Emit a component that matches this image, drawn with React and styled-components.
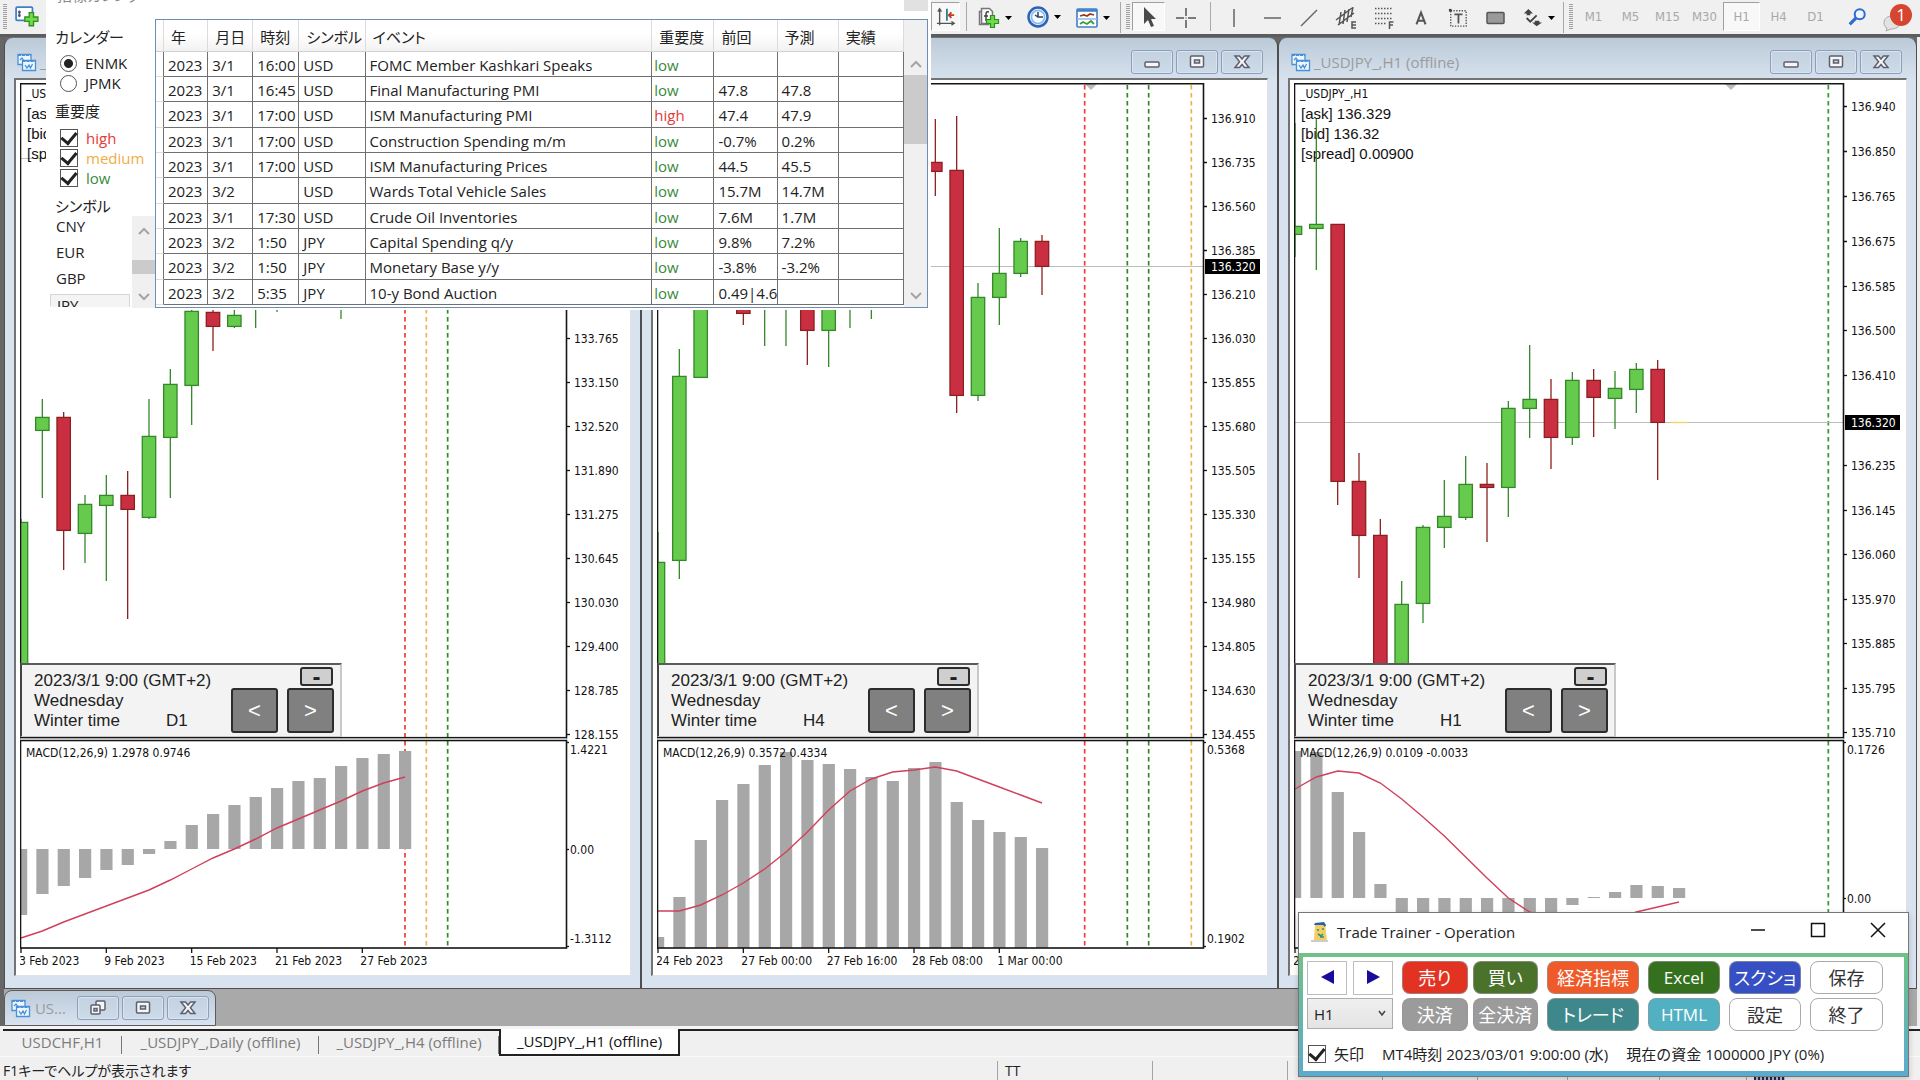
import React from "react";
import styled, { createGlobalStyle, css } from "styled-components";

const UI = `"Open Sans", "Noto Sans CJK JP", sans-serif`;
const CHART = `"DejaVu Sans Condensed", "Open Sans", sans-serif`;
const ARIAL = `"Liberation Sans", Arial, sans-serif`;

const GlobalStyle = createGlobalStyle`
  * { box-sizing: border-box; }
  body { margin: 0; background: #f0f0f0; font-family: ${UI}; color: #222; overflow: hidden; }
  button, select, input { font: inherit; color: inherit; margin: 0; }
`;

const Page = styled.div`
  position: relative;
  display: flex;
  flex-direction: column;
  min-height: 100vh;
  overflow: hidden;
`;

/* ---------- toolbar ---------- */

const Toolbar = styled.header`
  display: flex;
  align-items: stretch;
  height: 37px;
  padding-top: 2px;
  background: #f0f0f0;
  border-bottom: 3px solid #5c5c5c;
`;

const Spacer = styled.div`
  flex: 1;
`;

const ToolButton = styled.button`
  display: flex;
  align-items: center;
  justify-content: ${(p) => (p.$start ? "flex-start" : "center")};
  gap: 5px;
  width: ${(p) => p.$w || 37}px;
  height: 29px;
  margin-top: ${(p) => (p.$low ? 1 : 0)}px;
  padding: 0 0 0 ${(p) => (p.$start ? 5 : 0)}px;
  border: 0;
  background: none;
  font-family: ${CHART};
  font-size: 13px;
  color: #a8a8a8;
  ${(p) =>
    p.$pressed &&
    css`
      background: #f8f8f8;
      border: 1px solid;
      border-color: #a0a0a0 #fff #fff #a0a0a0;
    `}
`;

const ToolSeparator = styled.div`
  width: ${(p) => p.$w}px;
  height: 29px;
  background: linear-gradient(#a8a8a8, #a8a8a8) center / 1px 100% no-repeat;
`;

const Grip = styled.div`
  width: 12px;
  height: 31px;
  border-left: ${(p) => (p.$first ? 0 : 1)}px solid #a8a8a8;
  background: repeating-linear-gradient(#a0a0a0 0 1px, #f0f0f0 1px 2px) ${(p) => (p.$first ? 3 : 5)}px 2px / 4px 26px no-repeat;
`;

/* ---------- desktop and chart windows ---------- */

const Desktop = styled.main`
  flex: 1;
  display: flex;
  flex-direction: column;
  background: #a9a9a9;
  border-left: 4px solid #666;
  border-right: 3px solid #eee;
`;

const Tiles = styled.div`
  display: grid;
  grid-template-columns: 637fr 637fr 639fr;
  background: #666;
`;

const WindowFrame = styled.section`
  border: 1px solid #4e4e4e;
  border-top-color: #6b7680;
  border-radius: 9px 9px 0 0;
  background: linear-gradient(#bccad8, #d8e3ef 44px);
  padding: 0 9px 12px;
  overflow: hidden;
`;

const TitleBar = styled.div`
  display: flex;
  align-items: center;
  gap: 3px;
  height: 40px;
  padding: 7px 5px 0 3px;
`;

const WindowTitle = styled.h2`
  flex: 1;
  margin: 0;
  font-size: 15px;
  line-height: 20px;
  font-weight: 400;
  color: #9b9b9b;
  white-space: nowrap;
`;

const CaptionButtons = styled.div`
  display: flex;
  gap: 3px;
`;

const CaptionButton = styled.button`
  display: flex;
  align-items: center;
  justify-content: center;
  width: 42px;
  height: 24px;
  padding: 0;
  border: 1px solid #8e9dbb;
  border-radius: 3px;
  background: linear-gradient(#c4d1df, #cddae8);
  box-shadow: inset 0 0 0 1px #d9e4f0;
`;

const ChartFrame = styled.div`
  position: relative;
  padding: 3px 0 0 4px;
  background: #fff;
  border: solid;
  border-width: 2px 1px 1px 2px;
  border-color: #737373 #e2e2e2 #e2e2e2 #737373;
`;

const ChartSvg = styled.svg`
  display: block;
  width: 100%;
  height: 892px;
  text {
    font-family: ${CHART};
    font-size: 12px;
    fill: #111;
  }
  text.info {
    font-family: ${ARIAL};
    font-size: 15px;
  }
`;

const TimePanel = styled.aside`
  position: absolute;
  left: 4px;
  top: 583px;
  display: flex;
  justify-content: space-between;
  width: 322px;
  height: 74px;
  padding: 2px 6px 3px 12px;
  background: #f3f3f3;
  border: solid;
  border-width: 2px 2px 1px 2px;
  border-color: #5a5a5a #c8c8c8 #c8c8c8 #444;
  font-family: ${ARIAL};
  font-size: 17px;
  line-height: 20px;
  color: #222;
`;

const TimeText = styled.div`
  padding-top: 4px;
  white-space: nowrap;
`;

const TimeRow = styled.div`
  display: grid;
  grid-template-columns: 132px auto;
`;

const TimeButtons = styled.div`
  display: flex;
  flex-direction: column;
  align-items: flex-end;
  gap: 2px;
`;

const StepRow = styled.div`
  display: flex;
  gap: 9px;
`;

const CollapseButton = styled.button`
  width: 33px;
  height: 20px;
  margin-right: 1px;
  padding: 0;
  border: 2px solid #2c2c2c;
  border-radius: 3px;
  background: #cfcfcf;
  font-size: 24px;
  font-weight: 700;
  line-height: 14px;
`;

const StepButton = styled.button`
  width: 47px;
  height: 45px;
  padding: 0;
  border: 2px solid #2c2c2c;
  border-radius: 3px;
  background: #808080;
  color: #fff;
  font-size: 22px;
`;

const Minimized = styled.section`
  display: flex;
  align-items: center;
  width: 212px;
  height: 36px;
  margin: 1px 0 0;
  padding: 0 6px;
  border: 1px solid #5c5c5c;
  border-radius: 8px 8px 0 0;
  background: linear-gradient(#bccad8, #d8e3ef);
`;

/* ---------- bottom tabs and status ---------- */

const Tabs = styled.nav`
  display: flex;
  align-items: flex-start;
  height: 30px;
  padding: 0 0 0 3px;
  border-top: 3px solid #f4f4f4;
  background: #f0f0f0;
`;

const TabGroup = styled.div`
  display: flex;
  flex: ${(p) => (p.$fill ? "1" : "none")};
  min-height: 2px;
  border-top: 2px solid #222;
`;

const Tab = styled.a`
  height: 25px;
  width: ${(p) => p.$w}px;
  text-align: center;
  font-size: 15px;
  line-height: 22px;
  text-decoration: none;
  white-space: nowrap;
  color: ${(p) => (p.$active ? "#111" : "#7c7c7c")};
  ${(p) =>
    p.$active
      ? css`
          height: 27px;
          line-height: 25px;
          background: #fff;
          border: solid #222;
          border-width: 0 2px 2px;
        `
      : css`
          background: linear-gradient(#777, #777) right 5px / 1px 18px no-repeat;
        `}
`;

const StatusBar = styled.footer`
  display: flex;
  height: 24px;
  padding-top: 4px;
  background: #f0f0f0;
  border-top: 1px solid #fafafa;
`;

const StatusCell = styled.div`
  width: ${(p) => p.$w}px;
  flex: ${(p) => (p.$w ? "none" : "1")};
  display: flex;
  align-items: center;
  gap: 6px;
  height: 20px;
  padding-left: ${(p) => (p.$first ? 3 : 7)}px;
  border-left: ${(p) => (p.$first ? 0 : 1)}px solid #a5a5a5;
  font-size: 14px;
  line-height: 20px;
  white-space: nowrap;
  font-feature-settings: "palt";
`;

/* ---------- calendar window ---------- */

const CalendarWindow = styled.section`
  position: absolute;
  left: 46px;
  top: -24px;
  width: 885px;
  height: 334px;
  display: flex;
  flex-direction: column;
  background: #fff;
  overflow: hidden;
`;

const CalendarTitle = styled.div`
  display: flex;
  justify-content: space-between;
  height: 43px;
  padding: 8px 3px 0 11px;
  font-size: 15px;
  line-height: 22px;
  color: #8a8a8a;
  font-feature-settings: "palt";
`;

const CloseBox = styled.button`
  width: 24px;
  height: 27px;
  border: 0;
  background: #e1e1e1;
`;

const CalendarBody = styled.div`
  display: grid;
  grid-template-columns: 109px 773px;
  height: 289px;
`;

const Sidebar = styled.div`
  display: flex;
  flex-direction: column;
  padding: 8px 0 0 9px;
  font-size: 15px;
  overflow: hidden;
`;

const Heading = styled.h3`
  margin: 0;
  height: 20px;
  font-size: 15px;
  font-weight: 400;
  line-height: 20px;
  font-feature-settings: "palt";
`;

const Options = styled.div`
  padding: ${(p) => (p.$radio ? "6px 0 8px 5px" : "7px 0 8px 5px")};
`;

const Option = styled.label`
  display: flex;
  align-items: center;
  gap: 8px;
  height: 20px;
  line-height: 20px;
  color: ${(p) => p.$color || "#222"};
`;

const Radio = styled.input.attrs({ type: "radio" })`
  appearance: none;
  width: 17px;
  height: 17px;
  border: 1px solid #555;
  border-radius: 50%;
  background: #fff;
  &:checked {
    background: radial-gradient(circle, #222 0 4px, #fff 5px);
  }
`;

const Checkbox = styled.input.attrs({ type: "checkbox" })`
  appearance: none;
  display: grid;
  place-items: center;
  width: 18px;
  height: 18px;
  border: 1px solid #555;
  background: #fff;
  &:checked::after {
    content: "";
    width: 7px;
    height: 12px;
    margin-top: -3px;
    border: solid #222;
    border-width: 0 3px 3px 0;
    transform: rotate(40deg);
  }
`;

const SymbolBox = styled.div`
  display: flex;
  height: 92px;
  margin-left: -5px;
`;

const SymbolList = styled.select`
  flex: 1;
  height: 91px;
  padding: 0;
  border: 0;
  outline: 0;
  background: #fff;
  overflow: hidden;
  option {
    height: 26px;
    padding: 0 6px;
    line-height: 20px;
    color: #222;
  }
  option:last-child {
    border: 1px solid #d5d5d5;
    background: #f4f4f4;
    margin-right: 2px;
  }
`;

const ScrollTrack = styled.div`
  display: flex;
  flex-direction: column;
  align-items: center;
  justify-content: space-between;
  width: 23px;
  padding: ${(p) => p.$pad};
  background: #f0f0f0;
`;

const ScrollThumb = styled.div`
  width: 100%;
  height: ${(p) => p.$h}px;
  margin-bottom: auto;
  margin-top: ${(p) => p.$top}px;
  background: #cbcbcb;
`;

const TableBox = styled.div`
  display: flex;
  border: 1px solid #6c8db4;
  overflow: hidden;
`;

const EventTable = styled.table`
  width: 748px;
  height: 285px;
  table-layout: fixed;
  border-collapse: separate;
  border-spacing: 0;
  font-size: 15px;
  line-height: 20px;
  th {
    height: 32px;
    padding: 2px 0 0 7px;
    text-align: left;
    font-weight: 400;
    white-space: nowrap;
    background: linear-gradient(#fff 45%, #f2f2f2);
    border-right: 1px solid #dcdcdc;
    border-bottom: 1px solid #d0d0d0;
    font-feature-settings: "palt";
  }
  td {
    height: 25px;
    padding: 1px 0 0 4px;
    white-space: nowrap;
    overflow: hidden;
    border-right: 1px solid #707070;
    border-bottom: 1px solid #707070;
  }
  tbody tr:nth-child(3n) td {
    height: 26px;
  }
  td:first-child {
    border-bottom-color: #ddd;
  }
`;

const Level = styled.span`
  margin-left: -2px;
  color: ${(p) => (p.$high ? "#e53935" : "#3b8a3b")};
`;

/* ---------- operation window ---------- */

const OperationWindow = styled.section`
  position: absolute;
  right: 11px;
  bottom: 3px;
  width: 611px;
  background: #fff;
  border: 1px solid #777;
  box-shadow: 0 2px 6px rgba(0, 0, 0, 0.2);
`;

const OperationTitle = styled.div`
  display: flex;
  align-items: center;
  height: 40px;
  padding: 0 0 2px 12px;
  gap: 8px;
  h2 {
    flex: 1;
    margin: 0;
    font-size: 15px;
    font-weight: 400;
  }
`;

const PlainCaption = styled.button`
  width: 60px;
  height: 32px;
  padding: 0;
  border: 0;
  background: none;
`;

const OperationFrame = styled.div`
  padding: 4px 4px 5px;
  background: linear-gradient(#70c287, #5aabce);
`;

const OperationBody = styled.div`
  display: flex;
  flex-direction: column;
  gap: 3px;
  height: 114px;
  padding: 4px 5px 0 4px;
  background: #fff;
`;

const OpRow = styled.div`
  display: flex;
  gap: 9px;
`;

const Pair = styled.div`
  display: grid;
  grid-template-columns: 1fr 1fr;
  gap: ${(p) => p.$gap}px;
  width: ${(p) => p.$w}px;
`;

const NavButton = styled.button`
  height: 34px;
  padding: 0;
  border: 1px solid #bdbdbd;
  background: #fff;
`;

const PeriodSelect = styled.select`
  appearance: none;
  width: 86px;
  height: 31px;
  padding: 0 6px;
  border: 1px solid #adadad;
  border-radius: 0;
  font-size: 15px;
  background: url("data:image/svg+xml,%3Csvg xmlns='http://www.w3.org/2000/svg' width='8' height='7'%3E%3Cpath d='M1 1l3 4 3-4' fill='none' stroke='%23444' stroke-width='1.5'/%3E%3C/svg%3E")
      70px 11px no-repeat,
    linear-gradient(#efefef, #e4e4e4);
`;

const Action = styled.button`
  width: ${(p) => (p.$w ? p.$w + "px" : "auto")};
  height: 33px;
  padding: 0;
  border: 1px solid ${(p) => (p.$bg ? "rgba(150,150,150,0.7)" : "#aaa")};
  border-radius: 8px;
  background: ${(p) => p.$bg || "#fff"};
  color: ${(p) => (p.$bg ? "#fff" : "#333")};
  font-size: ${(p) => (p.$latin ? 17 : 18)}px;
  line-height: 24px;
  white-space: nowrap;
  font-feature-settings: "palt";
`;

const InfoRow = styled.div`
  display: flex;
  align-items: center;
  gap: 18px;
  padding: 10px 0 0 1px;
  font-size: 15px;
  line-height: 20px;
  white-space: nowrap;
  label {
    display: flex;
    align-items: center;
    gap: 8px;
  }
`;

/* ---------- chart data: [slot, up/down, high, low, bodyTop, bodyBottom] in px below the frame ---------- */

const PITCH = 64 / 3;
const slotX = (i) => 1 + i * PITCH;

const daily = {
  title: "_USDJPY_,Daily",
  caption: "_USDJPY_,Daily (offline)",
  period: "D1",
  axis: 546,
  ticks: [
    ["133.765", 255], ["133.150", 299], ["132.520", 343], ["131.890", 387], ["131.275", 431],
    ["130.645", 475], ["130.030", 519], ["129.400", 563], ["128.785", 607], ["128.155", 651],
  ],
  bid: 75,
  candles: [
    [0, 1, 436, 640, 439, 640], [1, 1, 316, 415, 334, 347], [2, 0, 329, 487, 334, 447],
    [3, 1, 412, 480, 421, 450], [4, 1, 392, 498, 412, 422], [5, 0, 388, 536, 412, 426],
    [6, 1, 316, 436, 353, 434], [7, 1, 286, 415, 301, 354], [8, 1, 220, 342, 228, 302],
    [9, 0, 220, 268, 229, 243], [10, 1, 220, 245, 232, 243], [11, 1, 200, 245, 200, 220],
    [12, 1, 200, 229, 200, 220], [15, 1, 200, 236, 200, 220],
  ],
  events: [[18, "#f23b32"], [19, "#f0b34a"], [20, "#2f8a22"]],
  macd: "MACD(12,26,9) 1.2978 0.9746",
  macdTicks: [["1.4221", 667], ["0.00", 767], ["-1.3112", 856]],
  base: 766,
  bars: [832, 811, 803, 795, 787, 782, 771, 758, 742, 731, 722, 714, 705, 698, 695, 683, 675, 671, 668],
  signal: [855, 848, 839, 831, 823, 815, 807, 797, 786, 775, 766, 756, 745, 736, 727, 718, 708, 700, 694],
  dates: ["3 Feb 2023", "9 Feb 2023", "15 Feb 2023", "21 Feb 2023", "27 Feb 2023"],
};

const h4 = {
  title: "_USDJPY_,H4",
  caption: "_USDJPY_,H4 (offline)",
  period: "H4",
  axis: 546,
  marker: 434,
  tag: 183,
  ticks: [
    ["136.910", 35], ["136.735", 79], ["136.560", 123], ["136.385", 167], ["136.210", 211],
    ["136.030", 255], ["135.855", 299], ["135.680", 343], ["135.505", 387], ["135.330", 431],
    ["135.155", 475], ["134.980", 519], ["134.805", 563], ["134.630", 607], ["134.455", 651],
  ],
  bid: 183,
  candles: [
    [0, 1, 449, 640, 479, 640], [1, 1, 266, 496, 293, 477], [2, 1, 200, 290, 200, 294],
    [4, 0, 200, 242, 200, 230], [5, 1, 200, 263, 200, 210], [6, 1, 200, 263, 200, 210],
    [7, 0, 200, 282, 200, 247], [8, 1, 200, 284, 200, 247], [9, 1, 200, 245, 200, 210],
    [10, 1, 200, 236, 200, 210], [13, 0, 36, 113, 79, 88], [14, 0, 33, 330, 87, 312],
    [15, 1, 200, 318, 214, 312], [16, 1, 145, 242, 190, 214], [17, 1, 155, 194, 158, 190],
    [18, 0, 152, 212, 158, 183],
  ],
  events: [[20, "#f23b32"], [22, "#2f8a22"], [23, "#2f8a22"], [25, "#f0b34a"]],
  macd: "MACD(12,26,9) 0.3572 0.4334",
  macdTicks: [["0.5368", 667], ["0.1902", 856]],
  base: 865,
  bars: [854, 814, 757, 717, 701, 682, 669, 677, 681, 686, 694, 698, 685, 679, 719, 737, 749, 754, 765],
  signal: [828, 828, 822, 812, 800, 786, 769, 749, 727, 708, 696, 689, 687, 684, 688, 696, 704, 712, 720],
  dates: ["24 Feb 2023", "27 Feb 00:00", "27 Feb 16:00", "28 Feb 08:00", "1 Mar 00:00"],
};

const h1 = {
  title: "_USDJPY_,H1",
  caption: "_USDJPY_,H1 (offline)",
  period: "H1",
  axis: 549,
  marker: 437,
  tag: 339,
  ticks: [
    ["136.940", 23], ["136.850", 68], ["136.765", 113], ["136.675", 158], ["136.585", 203],
    ["136.500", 247], ["136.410", 292], ["136.235", 382], ["136.145", 427], ["136.060", 471],
    ["135.970", 516], ["135.885", 560], ["135.795", 605], ["135.710", 649],
  ],
  bid: 339,
  candles: [
    [0, 1, 40, 174, 143, 151], [1, 1, 36, 187, 141, 145], [2, 0, 141, 422, 141, 398],
    [3, 0, 370, 495, 398, 452], [4, 0, 436, 640, 452, 640], [5, 1, 498, 640, 521, 640],
    [6, 1, 442, 540, 444, 520], [7, 1, 397, 465, 433, 444], [8, 1, 373, 437, 401, 434],
    [9, 0, 380, 459, 401, 404], [10, 1, 318, 434, 325, 404], [11, 1, 262, 355, 316, 325],
    [12, 0, 296, 386, 316, 354], [13, 1, 289, 362, 297, 354], [14, 0, 286, 354, 297, 314],
    [15, 1, 288, 346, 305, 315], [16, 1, 280, 330, 286, 306], [17, 0, 277, 397, 286, 339],
  ],
  flat: 18,
  events: [[25, "#2f9a32"]],
  macd: "MACD(12,26,9) 0.0109 -0.0033",
  macdTicks: [["0.1726", 667], ["0.00", 816]],
  base: 815,
  bars: [668, 669, 709, 749, 801, 840, 850, 855, 858, 856, 850, 842, 834, 822, 814, 809, 802, 803, 805],
  signal: [706, 694, 688, 690, 700, 716, 734, 753, 774, 795, 815, 829, 838, 843, 841, 836, 829, 824, 819],
  dates: ["28 Feb 2023"],
};

function Chart({ d }) {
  const right = d.axis;
  return (
    <ChartSvg role="img" aria-label={d.title}>
      <defs>
        <clipPath id={`plot-${d.period}`}>
          <rect x="0" y="0" width={right} height="866" />
        </clipPath>
      </defs>
      <g clipPath={`url(#plot-${d.period})`}>
        {d.events.map(([i, color]) => (
          <path key={i} d={`M${slotX(i)} 2V654M${slotX(i)} 658V864`} stroke={color} strokeWidth="1.7" strokeDasharray="4.5 3.5" />
        ))}
        <path d={`M0 ${d.bid + 0.5}H${right}`} stroke="#bdbdbd" strokeWidth="1.2" />
        <text className="info" x="7" y="36">[ask] 136.329</text>
        <text className="info" x="7" y="56">[bid] 136.32</text>
        <text className="info" x="7" y="76">[spread] 0.00900</text>
        {d.candles.map(([i, up, hi, lo, top, bottom]) => (
          <g key={i} stroke={up ? "#34882a" : "#8c2020"} fill={up ? "#66cb4d" : "#c92f40"} strokeWidth="1.3">
            <path d={`M${slotX(i)} ${hi}V${lo}`} />
            <rect x={slotX(i) - 6.7} y={top + 0.4} width="13.4" height={bottom - top} />
          </g>
        ))}
        {d.flat && <path d={`M${slotX(d.flat) - 8} ${d.bid + 0.5}h16`} stroke="#f5d46a" strokeWidth="1.4" />}
        {d.bars.map((y, i) => (
          <rect key={i} x={slotX(i) - 6} y={Math.min(y, d.base)} width="12.2" height={Math.abs(y - d.base)} fill="#a7a7a7" />
        ))}
        <polyline points={d.signal.map((y, i) => `${slotX(i)},${y}`).join(" ")} fill="none" stroke="#d0405a" strokeWidth="1.4" />
        {d.marker && <path d={`M${d.marker - 6} 1h12l-6 6z`} fill="#bbb" />}
      </g>
      <g fill="none" stroke="#151515" strokeWidth="1.6">
        <rect x="0.5" y="0.7" width={right} height="654" />
        <rect x="0.5" y="657.5" width={right} height="207.5" />
      </g>
      <path d={`M1 656H${right}`} stroke="#cfcfcf" />
      <text x="6" y="15">{d.title}</text>
      <text x="6" y="674">{d.macd}</text>
      {d.ticks.map(([label, y]) => (
        <g key={label}>
          <path d={`M${right} ${y + 0.5}h4`} stroke="#151515" strokeWidth="1.3" />
          <text x={right + 8} y={y + 5}>{label}</text>
        </g>
      ))}
      {d.macdTicks.map(([label, y], k) => (
        <g key={label}>
          <path d={`M${right} ${(label === "0.00" ? y : k ? 864 : 660) - 0.5}h3`} stroke="#151515" strokeWidth="1.3" />
          <text x={right + 4} y={y + 4}>{label}</text>
        </g>
      ))}
      {d.tag && (
        <g>
          <rect x={right + 2} y={d.tag - 7} width="55" height="15" fill="#000" />
          <text x={right + 8} y={d.tag + 5} style={{ fill: "#fff" }}>136.320</text>
        </g>
      )}
      {d.dates.map((label, k) => (
        <g key={label}>
          <path d={`M${slotX(k * 4)} 865v5`} stroke="#151515" strokeWidth="1.3" />
          <text x={slotX(k * 4) - 2} y="882">{label}</text>
        </g>
      ))}
    </ChartSvg>
  );
}

/* ---------- icons ---------- */

const ChartIcon = () => (
  <svg width="20" height="20" viewBox="0 0 20 20" fill="#eef6fd" stroke="#4a90d9" strokeWidth="1.3" aria-hidden="true">
    <path d="M1 2.5h13v10H1z" />
    <path d="M1 3h13" strokeWidth="2" strokeDasharray="3 1" />
    <path d="M3 8l2-2 2 3" fill="none" />
    <path d="M5.500 8.500h13v10h-13z" />
    <path d="M5.500 9h13" strokeWidth="2" strokeDasharray="3 1" />
    <path d="M8 13l2 3 2-3 1.500 3 2-4" fill="none" />
  </svg>
);

const capProps = { width: 18, height: 16, viewBox: "0 0 18 16", fill: "#f6f6f6", stroke: "#5c6070", strokeWidth: 1.5, "aria-hidden": true };
const MinIcon = () => (
  <svg {...capProps}><rect x="2" y="8" width="14" height="5" rx="1" /></svg>
);
const MaxIcon = () => (
  <svg {...capProps}><rect x="2.500" y="2" width="13" height="11" rx="1" /><rect x="6.500" y="6" width="5" height="3" fill="#c8d5e3" /></svg>
);
const RestoreIcon = () => (
  <svg {...capProps}><rect x="7" y="1" width="9" height="9" rx="1" /><rect x="2" y="5" width="9" height="9" rx="1" /><rect x="5" y="8.500" width="3" height="2.500" fill="#c8d5e3" /></svg>
);
const CloseIcon = () => (
  <svg {...capProps}><path d="M2 2h4.500L9 5l2.500-3H16l-4.600 5.700L16 13.500h-4.500L9 10.500l-2.500 3H2l4.600-5.800z" /></svg>
);

const Caption = ({ restore }) => (
  <CaptionButtons>
    <CaptionButton aria-label={restore ? "Restore" : "Minimize"}>{restore ? <RestoreIcon /> : <MinIcon />}</CaptionButton>
    <CaptionButton aria-label="Maximize"><MaxIcon /></CaptionButton>
    <CaptionButton aria-label="Close"><CloseIcon /></CaptionButton>
  </CaptionButtons>
);

const Svg = ({ s = 22, children, ...rest }) => (
  <svg width={s} height={s} viewBox="0 0 22 22" fill="none" stroke="#666" strokeWidth="1.5" aria-hidden="true" {...rest}>{children}</svg>
);
const Down = () => (
  <svg width="7" height="4" viewBox="0 0 7 4" aria-hidden="true"><path d="M0 0h7L3.500 4z" fill="#000" /></svg>
);
const Plus = () => (
  <path d="M12.500 8.500h4v4h4v4h-4v4h-4v-4h-4v-4h4z" fill="#6edb4a" stroke="#2f8d20" strokeWidth="1.200" />
);
const Chevron = ({ up }) => (
  <svg width="12" height="8" viewBox="0 0 12 8" fill="none" stroke="#a5a5a5" strokeWidth="2" aria-hidden="true">
    <path d={up ? "M1 7l5-5 5 5" : "M1 1l5 5 5-5"} />
  </svg>
);

function MainToolbar() {
  return (
    <Toolbar>
      <Grip $first />
      <ToolButton $w={30} aria-label="New chart">
        <Svg s={24}>
          <rect x="1" y="2" width="15" height="12" rx="1" fill="#fff" stroke="#3f7fc9" strokeWidth="1.600" />
          <path d="M4 5v6M2.800 6.500h2.500M2.800 9.500h2.500" stroke="#557" />
          <path d="M11.500 5h4v4h4v4h-4v4h-4v-4h-4v-4h4z" transform="translate(1.500 2)" fill="#6edb4a" stroke="#2f8d20" strokeWidth="1.200" />
        </Svg>
      </ToolButton>
      <Spacer />
      <ToolButton $w={29} $pressed aria-label="Chart shift">
        <Svg s={20}>
          <path d="M4 2v18M1 18h18M2 5l2-3 2 3M17 16l3 2-3 2" stroke="#555" />
          <path d="M12 2v13" stroke="#2b7f95" strokeWidth="2" />
          <path d="M20 9h-5M17 6l-3 3 3 3" stroke="#c2401d" strokeWidth="2" />
        </Svg>
      </ToolButton>
      <ToolSeparator $w={13} />
      <ToolButton $w={49} $low $start aria-label="Indicators">
        <Svg>
          <path d="M1.500 4.500h9v13h-9z" fill="#eee" stroke="#777" />
          <path d="M3.500 1.500h8l3 3v12h-11z" fill="#fafafa" stroke="#777" />
          <path d="M11 5c-3-1-3 1-3 3v6M6 9h4" stroke="#444" />
          <Plus />
        </Svg>
        <Down />
      </ToolButton>
      <ToolButton $w={49} $start aria-label="Periods">
        <Svg>
          <circle cx="11" cy="11" r="9.500" fill="#dceeff" stroke="#2c63b8" strokeWidth="2.500" />
          <circle cx="11" cy="11" r="6.500" fill="#f4faff" stroke="#8ab8ea" />
          <path d="M11 6v5h5M8 9l3 2" stroke="#345" />
        </Svg>
        <Down />
      </ToolButton>
      <ToolButton $w={49} $low $start aria-label="Templates">
        <Svg>
          <rect x="1" y="2" width="20" height="18" rx="1" fill="#fff" stroke="#3f7fc9" strokeWidth="1.600" />
          <path d="M1 3.500h20" stroke="#3f7fc9" strokeWidth="2.500" />
          <path d="M1 12h20" stroke="#8ab8ea" />
          <path d="M4 9l4-1 3 1 3-2 4 1" stroke="#9a3a1c" strokeWidth="1.800" />
          <path d="M4 17l3-2 4 2 4-3 3 3" stroke="#3f9a3a" strokeWidth="1.800" />
        </Svg>
        <Down />
      </ToolButton>
      <Grip />
      <ToolButton $w={33} $pressed aria-label="Cursor">
        <Svg stroke="none"><path d="M6 1v17l4-4 3 7 3-1-3-7h5z" fill="#4a4a4a" /></Svg>
      </ToolButton>
      <ToolButton $w={42} $low aria-label="Crosshair">
        <Svg><path d="M11 1v8M11 13v8M1 11h8M13 11h8M11 10.500v1" stroke="#555" /></Svg>
      </ToolButton>
      <ToolSeparator $w={6} />
      <ToolButton $w={40} $low aria-label="Vertical line"><Svg><path d="M12 2v18" /></Svg></ToolButton>
      <ToolButton $w={38} $low aria-label="Horizontal line"><Svg><path d="M3 11h17" /></Svg></ToolButton>
      <ToolButton $w={36} $low aria-label="Trendline"><Svg><path d="M3 19L19 3" /></Svg></ToolButton>
      <ToolButton $w={38} $low aria-label="Equidistant channel">
        <Svg stroke="#555">
          <path d="M1 13L17 1M3 18L19 6M6 5l-2 13M10 3L8 17M14 2l-2 13M18 0l-2 10" />
          <path d="M21 15h-4v6h4M17 18h4" />
        </Svg>
      </ToolButton>
      <ToolButton $w={37} $low aria-label="Fibonacci">
        <Svg stroke="#555">
          <path d="M2 1.500h18M2 6.500h18M2 11.500h18M2 16.500h12" strokeDasharray="1.500 1.500" />
          <path d="M20.500 15h-4v7M16.500 18h3.500" />
        </Svg>
      </ToolButton>
      <ToolButton $w={37} $low aria-label="Text"><Svg s={20} stroke="#555"><path d="M6 18l5-13 5 13M8 14h6" strokeWidth="2.200" /></Svg></ToolButton>
      <ToolButton $w={37} $low aria-label="Text label">
        <Svg s={20} stroke="#555">
          <rect x="3" y="3" width="17" height="17" strokeDasharray="1.500 1.500" />
          <path d="M7 7h9M11.500 7v10" strokeWidth="2" />
          <path d="M1 1h3v3H1z" fill="#444" stroke="none" />
        </Svg>
      </ToolButton>
      <ToolButton $w={38} $low aria-label="Rectangle"><Svg><rect x="3" y="5.500" width="17" height="11" rx="1" fill="#9a9a9a" stroke="#555" /></Svg></ToolButton>
      <ToolButton $w={49} $low aria-label="Arrows">
        <Svg s={20} stroke="#444">
          <path d="M6 1l5 5H8v2H4V6H1zM15 20l-5-4h3v-2h5v2h3z" fill="#444" stroke="none" />
          <path d="M4 11l4 4 7-7" strokeWidth="2" />
        </Svg>
        <Down />
      </ToolButton>
      <Grip />
      {["M1", "M5", "M15", "M30", "H1", "H4", "D1"].map((t) => (
        <ToolButton key={t} $pressed={t === "H1"}>{t}</ToolButton>
      ))}
      <ToolButton $w={45} aria-label="Search">
        <Svg s={20} stroke="#2f6ad0" strokeWidth="2.200"><circle cx="14" cy="8" r="5.500" fill="#eef5ff" /><path d="M10 12l-7 7" strokeWidth="3.500" /></Svg>
      </ToolButton>
      <ToolButton $w={41} aria-label="Notifications">
        <svg width="34" height="30" viewBox="0 0 34 30" aria-hidden="true">
          <path d="M1 21c0-5 4-7 8-7s8 3 8 7-5 6-9 6l-5 2 1-3c-2-1-3-3-3-5z" fill="#e2e2e2" stroke="#aaa" />
          <circle cx="18" cy="13" r="11" fill="#d5452f" />
          <text x="18" y="19" textAnchor="middle" fontSize="17" fill="#fff" fontFamily="Open Sans, sans-serif">1</text>
        </svg>
      </ToolButton>
    </Toolbar>
  );
}

function ChartWindow({ d }) {
  return (
    <WindowFrame>
      <TitleBar>
        <ChartIcon />
        <WindowTitle>{d.caption}</WindowTitle>
        <Caption />
      </TitleBar>
      <ChartFrame>
        <Chart d={d} />
        <TimePanel>
          <TimeText>
            2023/3/1 9:00 (GMT+2)
            <div>Wednesday</div>
            <TimeRow><span>Winter time</span><span>{d.period}</span></TimeRow>
          </TimeText>
          <TimeButtons>
            <CollapseButton>-</CollapseButton>
            <StepRow>
              <StepButton>&lt;</StepButton>
              <StepButton>&gt;</StepButton>
            </StepRow>
          </TimeButtons>
        </TimePanel>
      </ChartFrame>
    </WindowFrame>
  );
}

const columns = [["", 8], ["年", 44], ["月日", 45], ["時刻", 46], ["シンボル", 66], ["イベント", 286], ["重要度", 62], ["前回", 63], ["予測", 61], ["実績", 65]];
const rows = [
  ["3/1", "16:00", "USD", "FOMC Member Kashkari Speaks", "low", "", ""],
  ["3/1", "16:45", "USD", "Final Manufacturing PMI", "low", "47.8", "47.8"],
  ["3/1", "17:00", "USD", "ISM Manufacturing PMI", "high", "47.4", "47.9"],
  ["3/1", "17:00", "USD", "Construction Spending m/m", "low", "-0.7%", "0.2%"],
  ["3/1", "17:00", "USD", "ISM Manufacturing Prices", "low", "44.5", "45.5"],
  ["3/2", "", "USD", "Wards Total Vehicle Sales", "low", "15.7M", "14.7M"],
  ["3/1", "17:30", "USD", "Crude Oil Inventories", "low", "7.6M", "1.7M"],
  ["3/2", "1:50", "JPY", "Capital Spending q/y", "low", "9.8%", "7.2%"],
  ["3/2", "1:50", "JPY", "Monetary Base y/y", "low", "-3.8%", "-3.2%"],
  ["3/2", "5:35", "JPY", "10-y Bond Auction", "low", "0.49|4.6", ""],
];

function Calendar() {
  return (
    <CalendarWindow>
      <CalendarTitle>指標カレンダー<CloseBox aria-label="Close" /></CalendarTitle>
      <CalendarBody>
        <Sidebar>
          <Heading>カレンダー</Heading>
          <Options $radio>
            <Option><Radio name="calendar" defaultChecked />ENMK</Option>
            <Option><Radio name="calendar" />JPMK</Option>
          </Options>
          <Heading>重要度</Heading>
          <Options>
            <Option $color="#e53935"><Checkbox defaultChecked />high</Option>
            <Option $color="#efad45"><Checkbox defaultChecked />medium</Option>
            <Option $color="#3b8a3b"><Checkbox defaultChecked />low</Option>
          </Options>
          <Heading>シンボル</Heading>
          <SymbolBox>
            <SymbolList size="4" aria-label="シンボル">
              {["CNY", "EUR", "GBP", "JPY"].map((s) => <option key={s}>{s}</option>)}
            </SymbolList>
            <ScrollTrack $pad="11px 0 7px">
              <Chevron up />
              <ScrollThumb $h={14} $top={25} />
              <Chevron />
            </ScrollTrack>
          </SymbolBox>
        </Sidebar>
        <TableBox>
          <EventTable>
            <colgroup>{columns.map(([name, w]) => <col key={name} width={w} />)}</colgroup>
            <thead><tr>{columns.map(([name]) => <th key={name}>{name}</th>)}</tr></thead>
            <tbody>
              {rows.map((r, i) => (
                <tr key={i}>
                  <td /><td>2023</td><td>{r[0]}</td><td>{r[1]}</td><td>{r[2]}</td><td>{r[3]}</td>
                  <td><Level $high={r[4] === "high"}>{r[4]}</Level></td>
                  <td>{r[5]}</td><td>{r[6]}</td><td />
                </tr>
              ))}
            </tbody>
          </EventTable>
          <ScrollTrack $pad="40px 0 7px">
            <Chevron up />
            <ScrollThumb $h={69} $top={7} />
            <Chevron />
          </ScrollTrack>
        </TableBox>
      </CalendarBody>
    </CalendarWindow>
  );
}

function Operation() {
  return (
    <OperationWindow>
      <OperationTitle>
        <svg width="18" height="20" viewBox="0 0 18 20" aria-hidden="true">
          <path d="M0 19h17" stroke="#ccc" strokeWidth="2" />
          <path d="M4 3l10-1 2 16H3z" fill="#f3cf62" />
          <path d="M3 3l1-2 9-1 2 3-1 2-2-2H5z" fill="#2b5fae" />
          <path d="M6 8h2M11 7h2M7 12l3 2 2-2M9 15h4" stroke="#2a8f8a" strokeWidth="1.600" fill="none" />
        </svg>
        <h2>Trade Trainer - Operation</h2>
        <div>
          <PlainCaption aria-label="Minimize"><Svg stroke="#111"><path d="M4 11h14" /></Svg></PlainCaption>
          <PlainCaption aria-label="Maximize"><Svg stroke="#111"><rect x="4.500" y="4.500" width="13" height="13" /></Svg></PlainCaption>
          <PlainCaption aria-label="Close"><Svg stroke="#111"><path d="M4 4l14 14M18 4L4 18" /></Svg></PlainCaption>
        </div>
      </OperationTitle>
      <OperationFrame>
        <OperationBody>
          <OpRow>
            <Pair $w={86} $gap={6}>
              <NavButton aria-label="Back"><svg width="13" height="14" viewBox="0 0 13 14"><path d="M13 0v14L0 7z" fill="#1b0b9b" /></svg></NavButton>
              <NavButton aria-label="Forward"><svg width="13" height="14" viewBox="0 0 13 14"><path d="M0 0v14l13-7z" fill="#1b0b9b" /></svg></NavButton>
            </Pair>
            <Pair $w={136} $gap={5}>
              <Action $bg="#e23322">売り</Action>
              <Action $bg="#4a722b">買い</Action>
            </Pair>
            <Action $w={92} $bg="#ee5a2a">経済指標</Action>
            <Action $w={72} $bg="#35701f" $latin>Excel</Action>
            <Action $w={72} $bg="#3650c4">スクショ</Action>
            <Action $w={73}>保存</Action>
          </OpRow>
          <OpRow>
            <PeriodSelect aria-label="Period" defaultValue="H1"><option>H1</option><option>H4</option><option>D1</option></PeriodSelect>
            <Pair $w={136} $gap={5}>
              <Action $bg="#9b9b9b">決済</Action>
              <Action $bg="#9b9b9b">全決済</Action>
            </Pair>
            <Action $w={92} $bg="#3e888b">トレード</Action>
            <Action $w={72} $bg="#51b1c2" $latin>HTML</Action>
            <Action $w={72}>設定</Action>
            <Action $w={73}>終了</Action>
          </OpRow>
          <InfoRow>
            <label><Checkbox defaultChecked />矢印</label>
            <span>MT4時刻 2023/03/01 9:00:00 (水)</span>
            <span>現在の資金 1000000 JPY (0%)</span>
          </InfoRow>
        </OperationBody>
      </OperationFrame>
    </OperationWindow>
  );
}

export default function App() {
  return (
    <Page>
      <GlobalStyle />
      <MainToolbar />
      <Desktop>
        <Tiles>
          {[daily, h4, h1].map((d) => <ChartWindow key={d.period} d={d} />)}
        </Tiles>
        <Minimized>
          <ChartIcon />
          <WindowTitle>&nbsp;US...</WindowTitle>
          <Caption restore />
        </Minimized>
      </Desktop>
      <Tabs>
        <TabGroup>
          <Tab href="#usdchf" $w={119}>USDCHF,H1</Tab>
          <Tab href="#daily" $w={197}>_USDJPY_,Daily (offline)</Tab>
          <Tab href="#h4" $w={180}>_USDJPY_,H4 (offline)</Tab>
        </TabGroup>
        <Tab href="#h1" $w={181} $active>_USDJPY_,H1 (offline)</Tab>
        <TabGroup $fill />
      </Tabs>
      <StatusBar>
        <StatusCell $w={997} $first>F1キーでヘルプが表示されます</StatusCell>
        <StatusCell $w={155}>TT</StatusCell>
        <StatusCell $w={135} />
        <StatusCell $w={95} />
        <StatusCell $w={95} />
        <StatusCell $w={90} />
        <StatusCell $w={92} />
        <StatusCell $w={87} />
        <StatusCell>
          <svg width="31" height="18" viewBox="0 0 31 18" aria-hidden="true"><path d="M1 0v18M5 0v18M9 0v18M13 0v18M17 0v18M21 0v18M25 0v18M29 0v18" stroke="#1a2a5a" strokeWidth="2.500" /></svg>
          385/4 kb
        </StatusCell>
      </StatusBar>
      <Calendar />
      <Operation />
    </Page>
  );
}
